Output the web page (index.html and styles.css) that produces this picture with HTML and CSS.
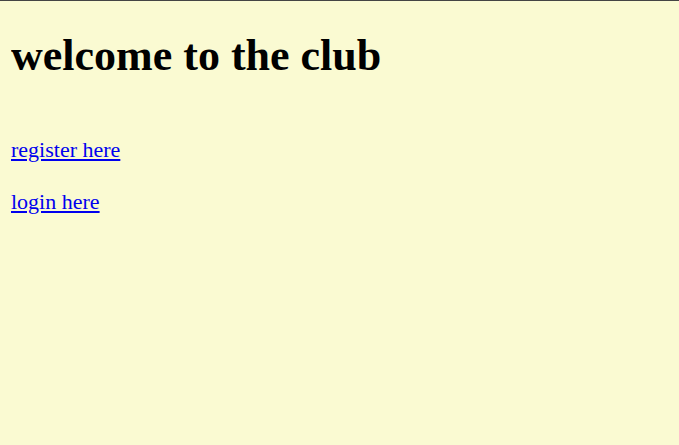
FILE: index.html
```html
<!DOCTYPE html>
<html>
<head>
<meta charset="utf-8">
<link rel="stylesheet" href="styles.css">
</head>
<body class="page">
<h1 class="title">welcome to the club</h1>
<p class="link-row"><a href="#">register here</a></p>
<p class="link-row"><a href="#">login here</a></p>
</body>
</html>
```
FILE: styles.css
```css
html {
  background: #fafad2;
  border-top: 1px solid #444;
}
.page {
  margin: 0 11px;
  font-family: "Liberation Serif", "Times New Roman", serif;
  font-size: 22px;
  color: #000;
}
.title {
  font-size: 44px;
  line-height: 50px;
  font-weight: bold;
  margin: 30px 0 56px;
}
.link-row {
  line-height: 26px;
  margin: 26px 0;
}
.link-row a {
  color: #0000ee;
}
```
